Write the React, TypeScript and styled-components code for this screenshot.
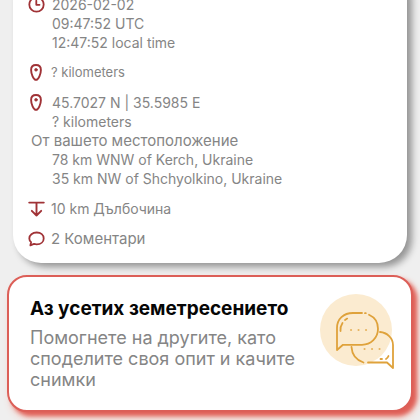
import React from "react";
import styled, { createGlobalStyle } from "styled-components";

const GlobalStyle = createGlobalStyle`
  * { box-sizing: border-box; }
  body {
    margin: 0;
    background: #efefef;
    font-family: Inter, "Noto Sans", sans-serif;
    color: #858585;
    overflow: hidden;
  }
`;

const Page = styled.main`
  display: flex;
  flex-direction: column;
  gap: 12px;
  padding: 0 7px 8px;
`;

const DetailsCard = styled.section`
  display: flex;
  flex-direction: column;
  gap: 11px;
  margin: -32px 6px 0;
  padding: 27px 14px 15px;
  background: #fff;
  border-radius: 28px;
  box-shadow: 5px 4px 7px 0 rgba(0, 0, 0, 0.38);
`;

const DetailRow = styled.div<{ $tight?: boolean }>`
  display: grid;
  grid-template-columns: 18px 1fr;
  column-gap: ${(p) => (p.$tight ? 6 : 7)}px;
  align-items: start;
`;

const IconCell = styled.span`
  display: flex;
  align-items: center;
  justify-content: center;
  height: 19px;
  color: #a03236;
`;

const Lines = styled.div<{ $size?: number }>`
  font-size: ${(p) => p.$size ?? 14}px;
  line-height: 19px;
`;

const Line = styled.p`
  margin: 0;
`;

const WideLine = styled.p`
  grid-column: 1 / -1;
  margin: 0;
  padding-left: 4px;
  font-size: 15px;
  line-height: 19px;
`;

const IndentedLines = styled(Lines)`
  grid-column: 2;
`;

const ReportCard = styled.button`
  display: flex;
  align-items: flex-start;
  justify-content: space-between;
  width: 100%;
  padding: 16px 16px 16px 21px;
  font: inherit;
  color: inherit;
  text-align: left;
  background: #fff;
  border: 2px solid #dc5f58;
  border-radius: 20px;
  box-shadow: 4px 4px 4px 0 #df5f57, 4px 6px 8px 0 #f3c3b8;
  cursor: pointer;
`;

const ReportText = styled.span`
  display: flex;
  flex: 1;
  flex-direction: column;
  gap: 6px;
  padding: 4px 0;
`;

const ReportTitle = styled.strong`
  font-size: 19px;
  line-height: 24px;
  font-weight: 700;
  color: #060606;
  white-space: nowrap;
`;

const ReportBody = styled.span`
  font-size: 18px;
  line-height: 21px;
`;

const Svg = styled.svg`
  display: block;
  flex: none;
  fill: none;
  stroke-linecap: round;
  stroke-linejoin: round;
`;

const ClockIcon = () => (
  <Svg width="17" height="17" viewBox="0 0 17 17" stroke="currentColor" strokeWidth="1.8" aria-hidden="true">
    <circle cx="8.5" cy="8.5" r="7.2" />
    <path d="M8.300 4.800v4h3.200" />
  </Svg>
);

const PinIcon = () => (
  <Svg width="12" height="17" viewBox="0 0 12 17" stroke="currentColor" strokeWidth="1.9" aria-hidden="true">
    <path d="M6 1C3 1 1.100 3.100 1.100 6c0 3.600 2.300 9.900 4.900 9.900s4.900-6.300 4.900-9.900C10.900 3.100 9 1 6 1Z" />
    <circle cx="6" cy="5.800" r="1.400" fill="currentColor" stroke="currentColor" strokeWidth="0.6" />
  </Svg>
);

const DepthIcon = () => (
  <Svg width="17" height="16" viewBox="0 0 17 16" stroke="currentColor" strokeWidth="1.9" aria-hidden="true">
    <path d="M1.2 1.6h14.600M8.500 2v12.500M3.800 9.800l4.700 4.700 4.700-4.700" />
  </Svg>
);

const CommentIcon = () => (
  <Svg width="17" height="16" viewBox="0 0 17 16" stroke="currentColor" strokeWidth="1.8" aria-hidden="true">
    <path d="M8.700 1.500c4.200 0 7 2.500 7 5.900s-2.800 5.900-7 5.900c-1 0-1.900-.1-2.700-.4L2.400 14.300l.7-3.200C2 10.200 1.300 8.800 1.300 7.400c0-3.400 3.200-5.900 7.400-5.900Z" />
  </Svg>
);

const ChatIllustration = () => (
  <Svg width="76" height="78" viewBox="0 0 76 78" stroke="#dfa23b" strokeWidth="1.8" aria-hidden="true">
    <circle cx="37" cy="37" r="36" fill="#fbebd0" stroke="none" />
    <path d="M72 56v14l-5-2.500H54c8-1.500 14-5.500 18-11.500Z" fill="#fff" stroke="none" />
    <path d="M61 39c7 .5 13 6 13 13v23l-6-5.500H49M44.500 69.500C37 67 33 62 32.500 54" />
    <path d="M43 20H34c-9.500 0-16 6-16 15v22l6-5.200h19c9 0 16-7 16-16 0-6-3.500-11.500-9-14" />
    <path d="M46 20.200h.8M21.500 38c-.3-3 .3-5.500 2-8M26 27l2.200-1.400M61.500 66h1.500M67 66c1.200-.7 2-1.700 2.500-3" />
    <path d="M32 37h.1M39.500 37h.1M47 37h.1M45.500 56h.1M53 56h.1M60.500 56h.1" strokeWidth="2" opacity=".75" />
  </Svg>
);

export default function App() {
  return (
    <Page lang="bg">
      <GlobalStyle />
      <DetailsCard>
        <DetailRow>
          <IconCell><ClockIcon /></IconCell>
          <Lines>
            <Line>2026-02-02</Line>
            <Line>09:47:52 UTC</Line>
            <Line>12:47:52 local time</Line>
          </Lines>
        </DetailRow>
        <DetailRow $tight>
          <IconCell><PinIcon /></IconCell>
          <Lines $size={13}>? kilometers</Lines>
        </DetailRow>
        <DetailRow>
          <IconCell><PinIcon /></IconCell>
          <Lines>
            <Line>45.7027 N | 35.5985 E</Line>
            <Line>? kilometers</Line>
          </Lines>
          <WideLine>От вашето местоположение</WideLine>
          <IndentedLines>
            <Line>78 km WNW of Kerch, Ukraine</Line>
            <Line>35 km NW of Shchyolkino, Ukraine</Line>
          </IndentedLines>
        </DetailRow>
        <DetailRow $tight>
          <IconCell><DepthIcon /></IconCell>
          <Lines>10 km Дълбочина</Lines>
        </DetailRow>
        <DetailRow $tight>
          <IconCell><CommentIcon /></IconCell>
          <Lines $size={15}>2 Коментари</Lines>
        </DetailRow>
      </DetailsCard>
      <ReportCard type="button">
        <ReportText>
          <ReportTitle>Аз усетих земетресението</ReportTitle>
          <ReportBody>Помогнете на другите, като споделите своя опит и качите снимки</ReportBody>
        </ReportText>
        <ChatIllustration />
      </ReportCard>
    </Page>
  );
}
